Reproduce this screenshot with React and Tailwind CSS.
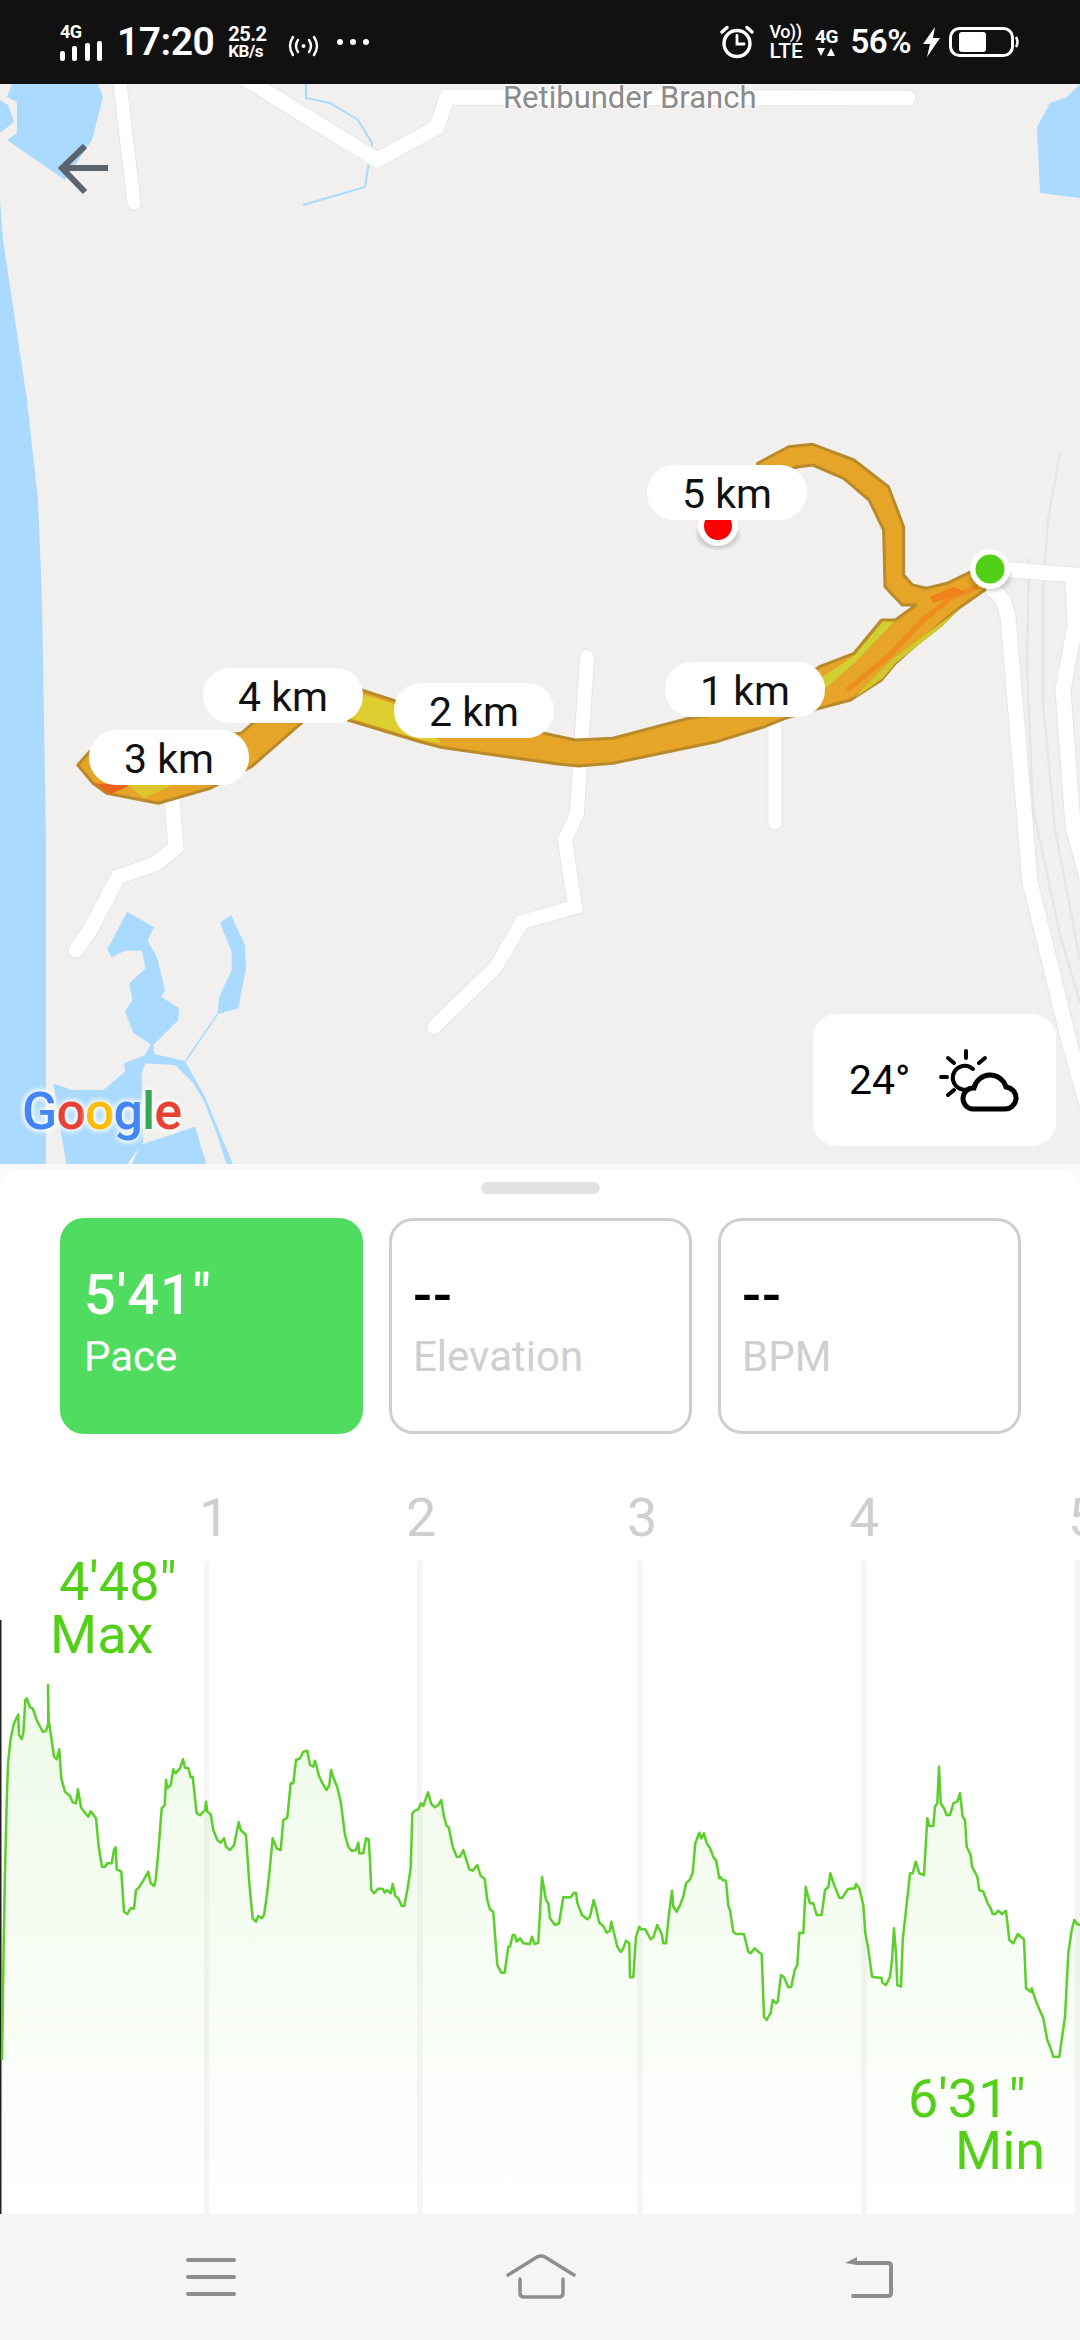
import React from 'react';

// coordinates below were read off zoomed crops, so scale them back to page pixels
const toPts = (list, sx, sy, ox, oy) =>
  list.map(([x, y]) => `${(x / sx + ox).toFixed(1)},${(y / sy + oy).toFixed(1)}`).join(' ');
const routePts = (list) => toPts(list, 1.452, 3, 0, 400);
const lakePts = (list) => toPts(list, 3, 3, 0, 900);

const paceA = [[10,900],[14,640],[20,400],[24,280],[32,205],[42,160],[55,133],[57,195],[65,207],[70,190],[76,90],[80,85],[90,112],[98,115],[110,150],[118,165],[128,185],[138,183],[145,160],[144,45],[146,150],[152,190],[162,260],[170,268],[178,238],[184,325],[195,365],[210,378],[218,397],[228,400],[234,358],[243,412],[255,428],[265,440],[272,424],[288,445],[296,530],[306,590],[315,590],[322,580],[335,580],[342,540],[347,532],[350,598],[364,605],[372,725],[382,732],[392,714],[402,716],[408,660],[415,655],[430,632],[445,605],[452,640],[462,648],[467,630],[475,545],[485,415],[494,405],[498,330],[502,355],[512,345],[520,298],[526,310],[540,295],[549,268],[555,293],[565,295],[572,322],[578,320],[590,430],[600,436],[615,420],[618,395],[622,425],[632,432],[640,480],[652,510],[662,518],[672,505],[678,530],[690,540],[702,526],[716,456],[722,480],[738,495],[748,640],[758,745],[768,755],[775,738],[785,745],[792,735],[800,680],[808,610],[818,505],[830,535],[842,540],[850,450],[862,443],[872,340],[880,340],[888,270],[900,265],[910,245],[922,242],[930,285],[940,290],[945,272],[958,320],[970,345],[980,360],[988,345],[993,300],[1000,322],[1012,352],[1022,395],[1035,495],[1045,530],[1055,543],[1068,540],[1075,518],[1078,550]];
const paceB = [[0,400],[10,400],[18,355],[26,358],[30,420],[34,510],[42,520],[55,506],[68,506],[74,518],[80,510],[92,520],[98,492],[106,528],[115,535],[125,558],[133,558],[142,510],[152,445],[157,280],[165,272],[175,268],[183,250],[190,258],[204,217],[214,252],[225,262],[235,255],[244,240],[252,290],[260,318],[266,322],[278,380],[290,410],[300,410],[310,390],[328,448],[338,452],[352,435],[362,468],[374,476],[382,540],[390,568],[400,575],[412,735],[424,758],[434,758],[445,680],[450,680],[458,645],[464,645],[470,665],[480,655],[490,670],[510,672],[516,650],[524,672],[535,668],[546,470],[558,540],[565,550],[570,595],[585,615],[597,610],[610,532],[632,532],[642,518],[648,518],[652,548],[666,585],[682,598],[690,590],[701,540],[708,565],[718,608],[730,618],[740,638],[750,632],[754,605],[772,680],[782,696],[790,685],[798,662],[808,670],[810,772],[820,772],[828,650],[838,620],[842,628],[856,628],[872,658],[880,652],[892,615],[905,642],[910,670],[918,670],[926,590],[936,512],[940,560],[950,575],[958,560],[970,530],[978,490],[990,478],[998,458],[1006,370],[1018,338],[1024,355],[1032,340],[1040,370],[1050,385],[1062,415],[1068,420],[1078,475]];
const paceC = [[0,410],[8,420],[18,422],[25,498],[30,510],[40,575],[48,582],[72,582],[85,635],[92,640],[104,625],[115,635],[125,642],[132,830],[140,840],[148,825],[152,820],[158,780],[168,790],[173,785],[183,705],[192,712],[205,742],[214,740],[224,690],[232,675],[238,578],[250,580],[257,440],[262,460],[270,490],[280,490],[290,525],[305,525],[315,450],[325,442],[331,400],[340,428],[358,473],[367,473],[384,447],[405,445],[408,432],[418,445],[430,495],[436,580],[444,620],[456,710],[485,714],[487,728],[498,735],[510,710],[516,660],[522,565],[528,640],[532,735],[543,740],[548,600],[556,530],[562,475],[570,400],[578,400],[587,365],[598,400],[612,405],[622,235],[628,258],[640,258],[645,200],[652,190],[657,80],[662,190],[672,205],[680,225],[690,225],[700,190],[712,185],[720,160],[728,230],[735,240],[740,320],[752,345],[756,380],[772,410],[778,450],[790,455],[803,490],[812,505],[818,522],[826,522],[835,512],[846,522],[858,512],[868,600],[880,610],[893,582],[912,598],[918,745],[932,755],[935,745],[950,790],[970,835],[982,900],[990,920],[1000,950],[1018,950],[1035,830],[1045,640],[1055,570],[1063,540],[1072,552],[1080,555]];

const paceLine = [toPts(paceA, 3, 3, 0, 1670), toPts(paceB, 3, 3, 360, 1720), toPts(paceC, 3, 3, 720, 1740)].join(' ');

const routeMain = [[1100,190],[1145,140],[1180,133],[1240,180],[1290,260],[1312,380],[1312,525],[1325,555],[1345,565],[1375,550],[1420,505],[1437,510],[1430,570],[1395,620],[1360,680],[1300,790],[1280,840],[1235,900],[1190,925],[1140,955],[1110,980],[1040,1025],[890,1090],[840,1098],[810,1092],[640,1042],[610,1025],[505,960],[525,870],[600,920],[790,1000],[835,1020],[890,1015],[1000,955],[1100,930],[1190,800],[1240,760],[1280,660],[1300,660],[1330,615],[1310,615],[1285,560],[1283,390],[1262,300],[1225,235],[1180,195],[1160,200],[1100,230]];
const routeLeft = [[370,965],[440,965],[365,1100],[305,1165],[230,1210],[155,1180],[135,1150],[113,1095],[130,1055],[150,1050],[350,1000]];
const lakeMain = [[382,35],[462,82],[443,122],[470,170],[495,270],[484,290],[537,325],[535,360],[460,435],[462,462],[555,483],[615,590],[660,700],[700,795],[680,795],[650,700],[610,600],[580,550],[525,495],[436,490],[425,520],[430,725],[380,795],[200,795],[180,680],[160,550],[215,570],[310,570],[375,515],[372,490],[435,465],[452,433],[400,398],[375,335],[397,300],[388,250],[437,205],[425,152],[375,152],[335,172],[322,148]];

const kmLabels = [
  { text: '5 km', pos: 'left-[647px] top-[381px]' },
  { text: '4 km', pos: 'left-[203px] top-[584px]' },
  { text: '3 km', pos: 'left-[89px] top-[646px]' },
  { text: '2 km', pos: 'left-[394px] top-[599px]' },
  { text: '1 km', pos: 'left-[665px] top-[578px]' },
];

const axisLabels = [
  { text: '1', pos: 'left-[199px]' },
  { text: '2', pos: 'left-[406px]' },
  { text: '3', pos: 'left-[627px]' },
  { text: '4', pos: 'left-[849px]' },
  { text: '5', pos: 'left-[1068px]' },
];

const googleLetters = [
  ['G', 'text-[#4285f4]'],
  ['o', 'text-[#e94235]'],
  ['o', 'text-[#fbbc04]'],
  ['g', 'text-[#4285f4]'],
  ['l', 'text-[#34a853]'],
  ['e', 'text-[#e94235]'],
];

const Road = ({ points, width = 15 }) => (
  <>
    <polyline points={points} fill="none" stroke="#e6e5e3" strokeWidth={width + 2} strokeLinecap="round" strokeLinejoin="miter" />
    <polyline points={points} fill="none" stroke="#ffffff" strokeWidth={width} strokeLinecap="round" strokeLinejoin="miter" />
  </>
);

const StatusBar = () => (
  <div className="h-[84px] bg-[#111111] text-white flex items-center justify-between pl-[60px] pr-[61px] shrink-0">
    <div className="flex items-center">
      <div className="w-[43px] flex flex-col">
        <span className="text-[18px] leading-[16px] font-bold tracking-[-0.5px]">4G</span>
        <svg width="43" height="20" viewBox="0 0 43 20" className="mt-px">
          <rect x="0" y="10" width="5" height="10" rx="2" fill="#fff" />
          <rect x="12" y="5" width="5" height="15" rx="2" fill="#fff" />
          <rect x="25" y="2" width="5" height="18" rx="2" fill="#fff" />
          <rect x="37" y="0" width="5" height="20" rx="2" fill="#fff" />
        </svg>
      </div>
      <span className="ml-[14px] text-[39px] leading-[44px] font-semibold tracking-[-0.5px]">17:20</span>
      <div className="ml-[14px] w-[42px] flex flex-col font-bold">
        <span className="text-[20px] leading-[18px] tracking-[-0.5px]">25.2</span>
        <span className="text-[17px] leading-[16px] tracking-[-0.5px]">KB/s</span>
      </div>
      <svg width="33" height="22" viewBox="0 0 33 22" className="ml-[17px] mt-[8px]" fill="none" stroke="#fff" strokeWidth="2.4" strokeLinecap="round">
        <path d="M6 2 Q0 11 6 20" />
        <path d="M11 5 Q7 11 11 17" />
        <path d="M22 5 Q26 11 22 17" />
        <path d="M27 2 Q33 11 27 20" />
        <circle cx="16.5" cy="11" r="2" fill="#fff" stroke="none" />
      </svg>
      <div className="ml-[17px] flex gap-[7px]">
        <div className="w-[6px] h-[6px] rounded-full bg-white" />
        <div className="w-[6px] h-[6px] rounded-full bg-white" />
        <div className="w-[6px] h-[6px] rounded-full bg-white" />
      </div>
    </div>
    <div className="flex items-center">
      <svg width="34" height="34" viewBox="0 0 34 34" fill="none" stroke="#fff" strokeWidth="3.4" strokeLinecap="round">
        <circle cx="17" cy="18.5" r="13" />
        <path d="M17 10.5 V19 H24" strokeWidth="2.8" />
        <path d="M2 7 L7 2.5 M32 7 L27 2.5" />
      </svg>
      <div className="ml-[15px] w-[36px] flex flex-col font-medium">
        <span className="text-[18px] leading-[17px] tracking-[-0.5px]">Vo))</span>
        <span className="text-[21px] leading-[19px] mt-[2px]">LTE</span>
      </div>
      <div className="ml-[8px] w-[26px] flex flex-col items-center">
        <span className="text-[19px] leading-[17px] font-bold tracking-[-0.5px]">4G</span>
        <svg width="18" height="9" viewBox="0 0 18 9" className="mt-[3px]" fill="#fff">
          <polygon points="0,0 8,0 4,8" />
          <polygon points="10,8 18,8 14,0" />
        </svg>
      </div>
      <span className="ml-[11px] text-[33px] leading-[38px] font-semibold tracking-[-0.5px]">56%</span>
      <svg width="18" height="30" viewBox="0 0 18 30" className="ml-[12px]" fill="#fff">
        <polygon points="12,0 0,17 7,17 4,30 17,11 10,11" />
      </svg>
      <svg width="70" height="30" viewBox="0 0 70 30" className="ml-[8px]">
        <rect x="1.5" y="1.5" width="62" height="27" rx="9" fill="none" stroke="#fff" strokeWidth="3" />
        <rect x="10" y="5" width="27" height="20" rx="3" fill="#fff" />
        <path d="M67 10 Q70 15 67 20" fill="none" stroke="#fff" strokeWidth="2.5" />
      </svg>
    </div>
  </div>
);

const MapDrawing = () => (
  <svg viewBox="0 84 1080 1080" width="1080" height="1080" className="block">
    <rect x="0" y="84" width="1080" height="1080" fill="#f2f0ee" />

    {/* water */}
    <g fill="#aadaff">
      <polygon points="0,200 3,240 27,400 38,500 42,600 46,840 46,1164 0,1164" />
      <polygon points="12,84 7,97 17,102 17,133 7,140 65,180 92,140 103,97 98,84" />
      <polygon points="0,100 8,105 14,122 0,133" />
      <polygon points="1080,84 1067,97 1050,103 1037,127 1040,193 1080,198" />
      <polygon points={lakePts(lakeMain)} />
      <polygon points={lakePts([[420,735],[585,680],[620,795],[395,795]])} />
      <polygon points={lakePts([[660,68],[693,45],[735,135],[738,205],[715,325],[652,343],[658,290],[695,210],[695,155]])} />
    </g>
    <polyline points={lakePts([[652,343],[557,483]])} fill="none" stroke="#aadaff" strokeWidth="1.5" />
    <polyline points="306,84 306,98 330,103 358,120 372,143 365,187 303,205" fill="none" stroke="#aadaff" strokeWidth="2" />

    {/* rail */}
    <g fill="none" stroke="#e3e5e8" strokeWidth="2.5">
      <polyline points="1029,558 1027,668 1033,808 1060,935 1080,1003" />
      <polyline points="1060,453 1048,520 1043,588 1043,702 1055,829 1080,960" />
    </g>

    {/* roads */}
    <Road points="120,84 134,203" width={13} />
    <Road points="244,78 377,160 437,127 447,97 908,98" width={15} />
    <Road points="587,657 577,813 565,840 575,907 522,922 496,967 434,1027" width={14} />
    <Road points="775,720 775,823" width={13} />
    <Road points="172,800 176,847 157,863 118,877 90,930 76,950" width={15} />
    <Road points="990,586 1003,600 1008,617 1030,882 1070,1045 1090,1115" width={15} />
    <Road points="1000,569 1073,575 1075,625 1063,690 1073,825 1090,890" width={15} />

    {/* route */}
    <g stroke="#b88a2c" strokeWidth="3" strokeLinejoin="round">
      <polygon points={routePts(routeMain)} fill="#e6a527" />
      <polygon points={routePts(routeLeft)} fill="#e6a527" />
    </g>
    <polygon points={routePts([[510,955],[530,885],[600,930],[640,1030],[612,1020]])} fill="#dccf2f" />
    <polygon points={routePts([[1195,830],[1240,768],[1282,665],[1298,665],[1240,790],[1190,880]])} fill="#cfd032" />
    <polygon points={routePts([[1395,625],[1368,680],[1300,790],[1282,835],[1240,895],[1270,830],[1300,770]])} fill="#cfc82f" />
    <polyline points={routePts([[1420,560],[1380,595],[1340,660],[1290,770],[1230,870]])} fill="none" stroke="#ee8c1f" strokeWidth="5" />
    <polygon points={routePts([[1350,590],[1385,560],[1400,575],[1355,610]])} fill="#f0801c" />
    <polygon points={routePts([[135,1150],[190,1155],[160,1182]])} fill="#e8641c" />
    <polygon points={routePts([[185,1155],[250,1155],[210,1195]])} fill="#dcc52f" />

    <defs>
      <radialGradient id="pinShadow">
        <stop offset="0%" stopColor="#000" stopOpacity="0.55" />
        <stop offset="100%" stopColor="#000" stopOpacity="0" />
      </radialGradient>
    </defs>

    {/* pins */}
    <ellipse cx="718" cy="535" rx="24" ry="16" fill="url(#pinShadow)" />
    <circle cx="718" cy="526" r="20" fill="#fff" />
    <circle cx="718" cy="526" r="14" fill="#ff0000" />
    <ellipse cx="990" cy="578" rx="24" ry="16" fill="url(#pinShadow)" />
    <circle cx="990" cy="569" r="20" fill="#fff" />
    <circle cx="990" cy="569" r="14.5" fill="#52d017" />
  </svg>
);

const MapView = () => (
  <div className="relative h-[1080px] shrink-0 overflow-hidden">
    <MapDrawing />

    <svg width="52" height="52" viewBox="0 0 52 52" className="absolute left-[58px] top-[59px]" fill="none" stroke="#5b646c" strokeWidth="6">
      <path d="M27 3 L4 25 L27 49" />
      <path d="M4 25 H50" />
    </svg>

    <span className="absolute left-[503px] top-[-4px] text-[31px] leading-[36px] text-[#8b8b8b] [text-shadow:0_0_3px_#fff,0_0_3px_#fff]">
      Retibunder Branch
    </span>

    {kmLabels.map((label) => (
      <div
        key={label.text}
        className={`absolute ${label.pos} w-[160px] h-[55px] pt-[3px] rounded-[27px] bg-white flex items-center justify-center text-[41px] leading-[48px] text-[#111111]`}
      >
        {label.text}
      </div>
    ))}

    <div className="absolute left-[22px] top-[998px] flex text-[52px] leading-[60px] font-medium tracking-[-1px] [text-shadow:0_0_6px_rgba(255,255,255,0.9),0_0_6px_rgba(255,255,255,0.9),0_0_6px_rgba(255,255,255,0.9)]">
      {googleLetters.map(([letter, color], i) => (
        <span key={i} className={color}>{letter}</span>
      ))}
    </div>

    <div className="absolute left-[813px] top-[930px] w-[243px] h-[132px] rounded-[24px] bg-white flex items-center pl-[36px]">
      <span className="text-[41px] leading-[48px] text-black">24°</span>
      <svg width="82" height="70" viewBox="938 1046 82 70" className="ml-[28px]" fill="none" stroke="#000" strokeLinecap="round">
        <path d="M973 1070 A12 12 0 1 0 971 1089" strokeWidth="4" />
        <path d="M966 1052 V1059 M948 1059 L954 1064 M985 1059 L979 1064 M941 1078 H947 M948 1096 L954 1091" strokeWidth="4" />
        <path d="M973 1110 H1004 A11 11 0 0 0 1006 1088 A16.5 16.5 0 0 0 974 1089 A10.5 10.5 0 0 0 973 1110 Z" strokeWidth="5" fill="#fff" />
      </svg>
    </div>
  </div>
);

const StatCard = ({ value, label, active }) => (
  <div
    className={`w-[303px] h-[216px] rounded-[24px] flex flex-col justify-center pb-[6px] ${
      active ? 'bg-[#4fdc5f] pl-[24px]' : 'border-[3px] border-[#cfcfcf] pl-[21px]'
    }`}
  >
    <span className={`text-[56px] leading-[62px] font-medium tracking-[1px] ${active ? 'text-white' : 'text-black'}`}>{value}</span>
    <span className={`text-[42px] leading-[50px] mt-[6px] ${active ? 'text-white' : 'text-[#cfcfcf]'}`}>{label}</span>
  </div>
);

const PaceChart = () => (
  <div className="relative flex-1 mt-[36px] overflow-hidden">
    <svg viewBox="0 1470 1080 744" width="1080" height="744" className="absolute left-0 top-0">
      <defs>
        <linearGradient id="paceFill" x1="0" y1="0" x2="0" y2="1">
          <stop offset="0%" stopColor="#52d017" stopOpacity="0.1" />
          <stop offset="100%" stopColor="#52d017" stopOpacity="0" />
        </linearGradient>
      </defs>
      <g fill="#f5f5f5">
        <rect x="204" y="1561" width="5.5" height="653" />
        <rect x="417" y="1561" width="5.5" height="653" />
        <rect x="637" y="1561" width="5.5" height="653" />
        <rect x="861" y="1561" width="5.5" height="653" />
        <rect x="1075" y="1561" width="5.5" height="653" />
      </g>
      <rect x="0" y="1620" width="1.5" height="594" fill="#222222" />
      <polygon points={`2,2214 2,2060 ${paceLine} 1080,2214`} fill="url(#paceFill)" />
      <polyline points={`2,2060 ${paceLine}`} fill="none" stroke="#5bd02a" strokeWidth="2.5" strokeLinejoin="round" />
    </svg>

    {axisLabels.map((axis) => (
      <span key={axis.text} className={`absolute ${axis.pos} top-[21px] text-[54px] leading-[54px] text-[#cfcfcf]`}>
        {axis.text}
      </span>
    ))}

    <div className="absolute left-[50px] top-[85px] flex flex-col items-start text-[54px] leading-[53px] text-[#52d017]">
      <span className="ml-[9px]">4'48"</span>
      <span>Max</span>
    </div>
    <div className="absolute left-[908px] top-[603px] flex flex-col items-start text-[54px] leading-[52px] text-[#52d017]">
      <span>6'31"</span>
      <span className="ml-[47px]">Min</span>
    </div>
  </div>
);

const NavBar = () => (
  <div className="h-[126px] bg-[#f5f5f5] flex items-center shrink-0">
    <svg width="50" height="42" viewBox="0 0 50 42" className="ml-[186px]" stroke="#8e8e8e" strokeWidth="4" strokeLinecap="round">
      <path d="M2 4 H48 M2 21 H48 M2 38 H48" />
    </svg>
    <svg width="70" height="46" viewBox="0 0 70 46" className="ml-[270px]" fill="none" stroke="#8e8e8e" strokeWidth="3.5" strokeLinecap="round" strokeLinejoin="round">
      <path d="M2 21 L31 3 Q35 1 39 3 L68 21" />
      <path d="M14 25 V39 Q14 43 18 43 H53 Q57 43 57 39 V25" />
    </svg>
    <svg width="50" height="44" viewBox="0 0 50 44" className="ml-[268px]" fill="none" stroke="#8e8e8e" strokeWidth="4" strokeLinecap="round" strokeLinejoin="round">
      <path d="M13 8 H44 Q47 8 47 11 V38 Q47 41 44 41 H9" />
      <polygon points="1,8 13,2 13,10" fill="#8e8e8e" stroke="none" />
    </svg>
  </div>
);

const App = () => {
  return (
    <div className="w-[1080px] h-[2340px] flex flex-col overflow-hidden bg-white font-[Roboto,sans-serif]">
      <StatusBar />
      <MapView />
      <div className="flex-1 flex flex-col bg-[#fafafa] pt-[6px] min-h-0">
        <div className="flex-1 flex flex-col bg-white rounded-t-[20px] min-h-0">
          <div className="mt-[12px] mx-auto w-[119px] h-[12px] rounded-[6px] bg-[#e2e2e2] shrink-0" />
          <div className="mt-[24px] pl-[60px] flex gap-[26px] shrink-0">
            <StatCard value={`5'41"`} label="Pace" active />
            <StatCard value="--" label="Elevation" />
            <StatCard value="--" label="BPM" />
          </div>
          <PaceChart />
          <NavBar />
        </div>
      </div>
    </div>
  );
};

export default App;
